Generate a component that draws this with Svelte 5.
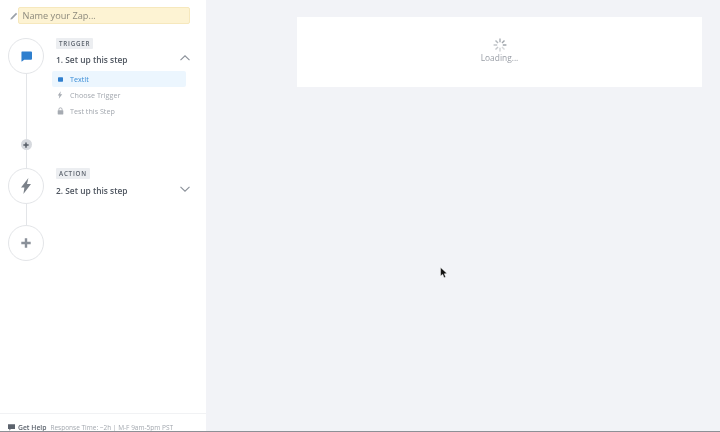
<script>
	const subSteps = [
		{ label: 'TextIt', icon: 'square', active: true },
		{ label: 'Choose Trigger', icon: 'bolt' },
		{ label: 'Test this Step', icon: 'lock' }
	];
	const spokes = [0, 45, 90, 135, 180, 225, 270, 315];
</script>

<div class="page">
	<aside class="sidebar">
		<div class="name-row">
			<svg class="pencil" viewBox="0 0 10 10" width="8" height="8">
				<path d="M0.5 9.5 L1 7.5 L7.5 1 L9 2.5 L2.5 9 Z" fill="#9aa0a8" />
			</svg>
			<div class="name-input">Name your Zap...</div>
		</div>

		<div class="flow">
			<section class="step step-one">
				<div class="rail">
					<div class="circle">
						<svg viewBox="0 0 12 12" width="11" height="11">
							<path d="M1 0.5 H11 Q12 0.5 12 1.5 V8.5 Q12 9.5 11 9.5 H3.5 L1 11.5 Q0.5 11.8 0.5 11 V1 Q0.5 0.5 1 0.5 Z" fill="#2f7fce" />
						</svg>
					</div>
					<div class="line grow"></div>
					<div class="mini-plus">
						<svg viewBox="0 0 8 8" width="6" height="6">
							<path d="M3 0.5 H5 V3 H7.5 V5 H5 V7.5 H3 V5 H0.5 V3 H3 Z" fill="#555c66" />
						</svg>
					</div>
					<div class="line after-plus"></div>
				</div>
				<div class="body">
					<span class="tag">TRIGGER</span>
					<div class="title-row">
						<h2>1. Set up this step</h2>
						<svg class="chevron" viewBox="0 0 10 6" width="10" height="6">
							<path d="M0.5 5.2 L5 0.8 L9.5 5.2" fill="none" stroke="#8a9099" stroke-width="1.1" />
						</svg>
					</div>
					<ul class="sub-steps">
						{#each subSteps as sub}
							<li class:active={sub.active}>
								<span class="sub-icon">
									{#if sub.icon === 'square'}
										<svg viewBox="0 0 8 8" width="5" height="5"><rect width="8" height="7" y="0.5" rx="1" fill="#2f7fce" /></svg>
									{:else if sub.icon === 'bolt'}
										<svg viewBox="0 0 8 10" width="6" height="8"><path d="M5 0 L1 5.5 H3.2 L2.4 10 L7 4 H4.4 Z" fill="#a6abb2" /></svg>
									{:else}
										<svg viewBox="0 0 8 10" width="7" height="8">
											<path d="M2 4.5 V3 A2 2 0 0 1 6 3 V4.5" fill="none" stroke="#a6abb2" stroke-width="1.1" />
											<rect x="0.5" y="4.2" width="7" height="5.3" rx="0.6" fill="#a6abb2" />
										</svg>
									{/if}
								</span>
								<span>{sub.label}</span>
							</li>
						{/each}
					</ul>
				</div>
			</section>

			<section class="step step-two">
				<div class="rail">
					<div class="circle">
						<svg viewBox="0 0 10 16" width="10" height="16">
							<path d="M7.4 0 L0 9.6 H3.4 L2.4 16 L10 6 H6 Z" fill="#7b8189" />
						</svg>
					</div>
					<div class="line connector"></div>
				</div>
				<div class="body">
					<span class="tag">ACTION</span>
					<div class="title-row compact">
						<h2>2. Set up this step</h2>
						<svg class="chevron" viewBox="0 0 10 6" width="10" height="6">
							<path d="M0.5 0.8 L5 5.2 L9.5 0.8" fill="none" stroke="#8a9099" stroke-width="1.1" />
						</svg>
					</div>
				</div>
			</section>

			<div class="circle add">
				<svg viewBox="0 0 10 10" width="10" height="10">
					<path d="M3.8 0.3 H6.2 V3.8 H9.7 V6.2 H6.2 V9.7 H3.8 V6.2 H0.3 V3.8 H3.8 Z" fill="#8a9099" />
				</svg>
			</div>
		</div>

		<footer class="help">
			<svg viewBox="0 0 10 9" width="7" height="7">
				<path d="M0 0 H10 V6.5 H4 L2 9 V6.5 H0 Z" fill="#5c636d" />
			</svg>
			<strong>Get Help</strong>
			<span>Response Time: ~2h | M-F 9am-5pm PST</span>
		</footer>
	</aside>

	<main class="content">
		<div class="card">
			<svg class="spinner" viewBox="0 0 14 14" width="14" height="14">
				{#each spokes as deg, i}
					<line
						x1="7" y1="0.6" x2="7" y2="4.2"
						stroke="#8f959d"
						stroke-width="1.4"
						opacity={0.35 + (((i + 5) % 8) / 8) * 0.65}
						transform="rotate({deg} 7 7)"
					/>
				{/each}
			</svg>
			<div class="loading">Loading...</div>
		</div>
	</main>

	<svg class="cursor" viewBox="0 0 9 14" width="8" height="12">
		<path d="M0.5 0.5 V10.5 L3 8.4 L4.6 12.5 L6.4 11.7 L4.8 7.9 L8 7.7 Z" fill="#111" stroke="#fff" stroke-width="0.5" />
	</svg>
</div>

<style>
	:global(body) {
		margin: 0;
		font-family: 'Open Sans', 'Liberation Sans', sans-serif;
	}

	.page {
		position: relative;
		display: flex;
		width: 720px;
		height: 432px;
		box-sizing: border-box;
		border-bottom: 1px solid #8d9096;
		background: #f2f3f7;
		overflow: hidden;
		filter: blur(0.35px);
	}

	.sidebar {
		display: flex;
		flex-direction: column;
		width: 206px;
		flex-shrink: 0;
		background: #fff;
	}

	.name-row {
		display: flex;
		align-items: center;
		padding: 7px 16px 0 10px;
	}

	.pencil {
		flex-shrink: 0;
	}

	.name-input {
		flex: 1;
		height: 17px;
		box-sizing: border-box;
		line-height: 16px;
		padding-left: 3.5px;
		font-size: 9.2px;
		color: #8d8a7d;
		background: #fdf3d3;
		border: 0.5px solid #f6e8bd;
		border-radius: 2px;
	}

	.flow {
		padding: 14px 0 0 8px;
	}

	.step {
		display: flex;
		gap: 12px;
	}

	.step-one {
		height: 130px;
	}

	.step-two {
		height: 57px;
	}

	.rail {
		display: flex;
		flex-direction: column;
		align-items: center;
		width: 36px;
		flex-shrink: 0;
	}

	.circle {
		display: flex;
		align-items: center;
		justify-content: center;
		width: 36px;
		height: 36px;
		box-sizing: border-box;
		flex-shrink: 0;
		background: #fff;
		border: 1px solid #e3e5e8;
		border-radius: 50%;
	}

	.line {
		width: 1px;
		background: #e3e5e8;
	}

	.grow,
	.connector {
		flex: 1;
	}

	.after-plus {
		height: 18px;
	}

	.mini-plus {
		display: flex;
		align-items: center;
		justify-content: center;
		width: 11px;
		height: 11px;
		flex-shrink: 0;
		background: #d6d9de;
		border-radius: 50%;
	}

	.body {
		flex: 1;
		padding-right: 16px;
		min-width: 0;
	}

	.tag {
		display: block;
		width: fit-content;
		height: 11px;
		line-height: 11.5px;
		padding: 0 3px;
		font-size: 6.2px;
		font-weight: 600;
		letter-spacing: 0.8px;
		color: #5c636d;
		background: #eceef1;
		border-radius: 1px;
	}

	.title-row {
		display: flex;
		align-items: center;
		justify-content: space-between;
		height: 14px;
		margin-top: 3px;
	}

	.title-row.compact {
		margin-top: 4px;
	}

	h2 {
		margin: 0;
		font-size: 8.4px;
		font-weight: 600;
		color: #4f5660;
	}

	.chevron {
		margin-top: -2px;
	}

	.sub-steps {
		list-style: none;
		margin: 5px 4px 0 -4px;
		padding: 0;
	}

	.sub-steps li {
		display: flex;
		align-items: center;
		height: 16px;
		font-size: 7.2px;
		font-weight: 500;
		color: #a3a8af;
	}

	.sub-steps li.active {
		color: #3a8dd6;
		background: #ecf6fe;
		border-radius: 2px;
	}

	.sub-icon {
		display: flex;
		justify-content: center;
		width: 16px;
		margin-right: 2px;
	}

	.help {
		display: flex;
		align-items: center;
		gap: 3px;
		margin-top: auto;
		height: 18px;
		padding: 9px 0 0 8px;
		box-sizing: border-box;
		border-top: 1px solid #f1f2f4;
		font-size: 6.5px;
		white-space: nowrap;
		color: #a3a8af;
	}

	.help strong {
		font-size: 6.8px;
		font-weight: 600;
		color: #5c636d;
		margin-right: 1px;
	}

	.content {
		flex: 1;
		padding: 17px 18px 0 91px;
	}

	.card {
		display: flex;
		flex-direction: column;
		align-items: center;
		height: 70px;
		padding-top: 21px;
		box-sizing: border-box;
		background: #fff;
	}

	.loading {
		font-size: 8.4px;
		font-weight: 500;
		line-height: 12px;
		color: #989da5;
	}

	.cursor {
		position: absolute;
		left: 440px;
		top: 267px;
	}
</style>
